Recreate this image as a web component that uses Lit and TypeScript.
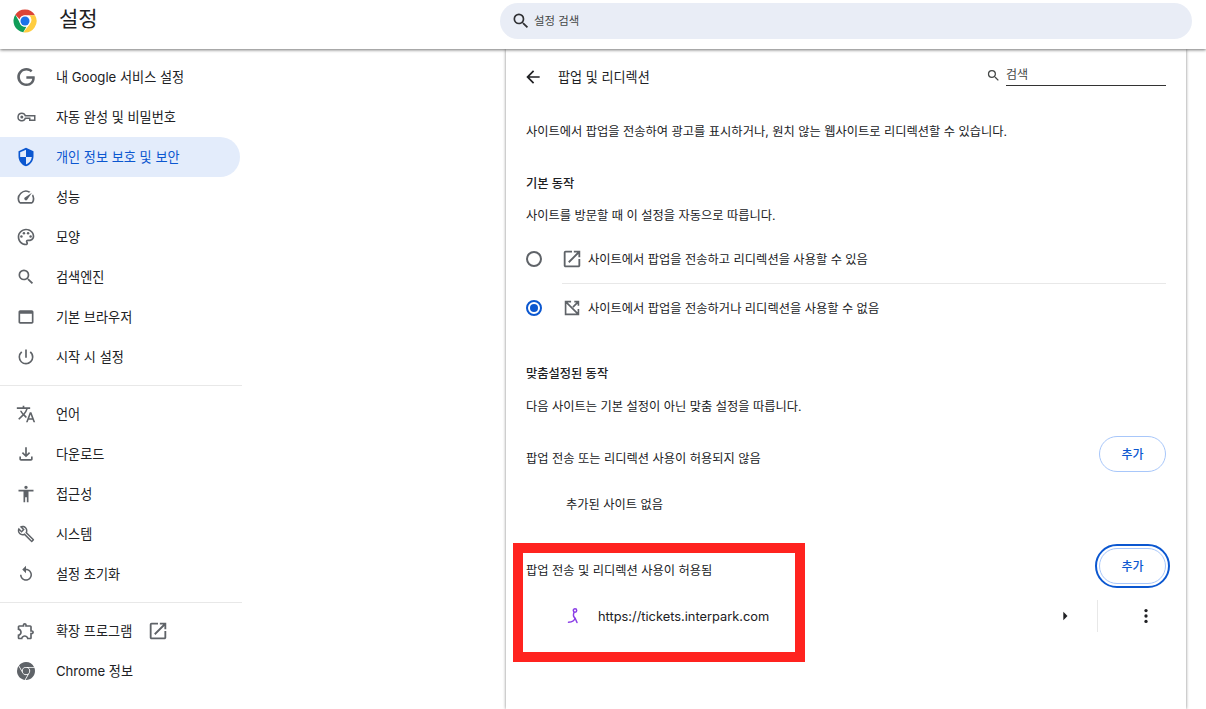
import { LitElement, html, css, svg } from "lit";
import { customElement } from "lit/decorators.js";

const P: Record<string, any> = {
  g: svg`<path d="M12.48 10.92v3.28h7.84c-.24 1.84-.853 3.187-1.787 4.133-1.147 1.147-2.933 2.4-6.053 2.4-4.827 0-8.6-3.893-8.6-8.72s3.773-8.72 8.6-8.72c2.6 0 4.507 1.027 5.907 2.347l2.307-2.307C18.747 1.44 16.133 0 12.48 0 5.867 0 .307 5.387.307 12s5.56 12 12.173 12c3.573 0 6.267-1.173 8.373-3.36 2.16-2.16 2.84-5.213 2.84-7.667 0-.76-.053-1.467-.173-2.053H12.48z"/>`,
  key: svg`<path d="M7 7.500a4.500 4.500 0 1 0 4.200 6h5.300v2.500h6v-5.500h-11.300A4.500 4.500 0 0 0 7 7.500z" fill="none" stroke="currentColor" stroke-width="1.800"/><circle cx="7" cy="12" r="1.800"/>`,
  shield: svg`<path d="M12 1L3 5v6c0 5.55 3.84 10.74 9 12 5.16-1.26 9-6.45 9-12V5l-9-4zm0 10.99h7c-.53 4.12-3.28 7.79-7 8.94V12H5V6.3l7-3.11v8.8z"/>`,
  speed: svg`<path d="M20.38 8.57l-1.23 1.85a8 8 0 0 1-.22 7.58H5.07A8 8 0 0 1 15.58 6.85l1.85-1.23A10 10 0 0 0 3.35 19a2 2 0 0 0 1.72 1h13.85a2 2 0 0 0 1.74-1 10 10 0 0 0-.27-10.44zm-9.79 6.84a2 2 0 0 0 2.83 0l5.66-8.49-8.49 5.66a2 2 0 0 0 0 2.83z"/>`,
  palette: svg`<path d="M12 22C6.49 22 2 17.51 2 12S6.49 2 12 2s10 4.04 10 9c0 3.31-2.69 6-6 6h-1.77c-.28 0-.5.22-.5.5 0 .12.05.23.13.33.41.47.64 1.06.64 1.67 0 1.38-1.12 2.5-2.5 2.5zm0-18c-4.41 0-8 3.59-8 8s3.59 8 8 8c.28 0 .5-.22.5-.5a.54.54 0 0 0-.14-.35c-.41-.46-.63-1.05-.63-1.65 0-1.38 1.12-2.5 2.5-2.5H16c2.21 0 4-1.79 4-4 0-3.86-3.59-7-8-7z"/><circle cx="6.500" cy="11.500" r="1.500"/><circle cx="9.500" cy="7.500" r="1.500"/><circle cx="14.500" cy="7.500" r="1.500"/><circle cx="17.500" cy="11.500" r="1.500"/>`,
  search: svg`<path d="M15.5 14h-.79l-.28-.27A6.471 6.471 0 0 0 16 9.5 6.5 6.5 0 1 0 9.5 16c1.61 0 3.09-.59 4.23-1.57l.27.28v.79l5 4.99L20.49 19l-4.99-5zm-6 0C7.01 14 5 11.99 5 9.5S7.01 5 9.5 5 14 7.01 14 9.5 11.99 14 9.5 14z"/>`,
  web: svg`<path d="M19 4H5c-1.11 0-2 .9-2 2v12c0 1.1.89 2 2 2h14c1.1 0 2-.9 2-2V6c0-1.1-.89-2-2-2zm0 14H5V8h14v10z"/>`,
  power: svg`<path d="M13 3h-2v10h2V3zm4.83 2.17l-1.42 1.42A6.92 6.92 0 0 1 19 12c0 3.87-3.13 7-7 7A6.995 6.995 0 0 1 7.58 6.58L6.17 5.17A8.932 8.932 0 0 0 3 12a9 9 0 0 0 18 0c0-2.74-1.23-5.18-3.17-6.83z"/>`,
  lang: svg`<path d="M12.87 15.07l-2.54-2.51.03-.03A17.52 17.52 0 0 0 14.07 6H17V4h-7V2H8v2H1v1.99h11.17C11.5 7.92 10.44 9.75 9 11.35 8.07 10.32 7.3 9.19 6.69 8h-2c.73 1.63 1.73 3.17 2.98 4.56l-5.09 5.02L4 19l5-5 3.11 3.11.76-2.04zM18.5 10h-2L12 22h2l1.12-3h4.75L21 22h2l-4.5-12zm-2.62 7l1.62-4.33L19.12 17h-3.24z"/>`,
  down: svg`<path d="M18 15v3H6v-3H4v3c0 1.1.9 2 2 2h12c1.1 0 2-.9 2-2v-3h-2zm-1-4l-1.41-1.41L13 12.17V4h-2v8.17L8.41 9.59 7 11l5 5 5-5z"/>`,
  access: svg`<path d="M12 2c1.1 0 2 .9 2 2s-.9 2-2 2-2-.9-2-2 .9-2 2-2zm9 7h-6v13h-2v-6h-2v6H9V9H3V7h18v2z"/>`,
  build: svg`<path d="M22.61 18.99l-9.08-9.08c.93-2.34.45-5.1-1.44-7C9.79.61 6.21.4 3.66 2.26L7.5 6.11 6.08 7.52 2.25 3.69C.39 6.23.6 9.82 2.9 12.11c1.86 1.86 4.57 2.35 6.89 1.48l9.11 9.11c.39.39 1.02.39 1.41 0l2.3-2.3c.4-.38.4-1.01 0-1.41zm-3 1.6l-9.46-9.46c-.61.45-1.29.72-2 .82-1.36.2-2.79-.21-3.83-1.25C3.37 9.76 2.93 8.5 3 7.26l3.09 3.09 4.24-4.24-3.09-3.09c1.24-.07 2.49.37 3.44 1.31 1.08 1.08 1.49 2.57 1.24 3.96-.12.71-.42 1.37-.88 1.96l9.45 9.45-.88.88z"/>`,
  restore: svg`<path d="M12 5V1L7 6l5 5V7c3.31 0 6 2.69 6 6s-2.69 6-6 6-6-2.69-6-6H4c0 4.42 3.58 8 8 8s8-3.58 8-8-3.58-8-8-8z"/>`,
  ext: svg`<path d="M10.5 4.5c.28 0 .5.22.5.5v2h6v6h2c.28 0 .5.22.5.5s-.22.5-.5.5h-2v6h-2.120c-.68-1.750-2.390-3-4.380-3s-3.700 1.250-4.380 3H4v-2.120c1.750-.68 3-2.390 3-4.380 0-1.990-1.240-3.700-2.990-4.380L4 7h6V5c0-.28.22-.5.5-.5m0-2C9.120 2.500 8 3.620 8 5H4c-1.100 0-1.990.9-1.990 2v3.800h.29c1.490 0 2.700 1.210 2.700 2.700s-1.210 2.700-2.700 2.700H2V20c0 1.100.9 2 2 2h3.800v-.3c0-1.490 1.210-2.700 2.700-2.700s2.700 1.210 2.700 2.700v.3H17c1.100 0 2-.9 2-2v-4c1.380 0 2.500-1.120 2.500-2.500S20.380 11 19 11V7c0-1.100-.9-2-2-2h-4c0-1.380-1.120-2.500-2.500-2.500z"/>`,
  chrome: svg`<path d="M12 0C8.21 0 4.831 1.757 2.632 4.501l3.953 6.848A5.454 5.454 0 0 1 12 6.545h10.691A12 12 0 0 0 12 0zM1.931 5.47A11.943 11.943 0 0 0 0 12c0 6.012 4.42 10.991 10.189 11.864l3.953-6.847a5.45 5.45 0 0 1-6.865-2.29zm13.342 2.166a5.446 5.446 0 0 1 1.45 7.09l.002.003h-.002l-5.344 9.257c.206.01.413.016.621.016 6.627 0 12-5.373 12-12 0-1.54-.29-3.011-.818-4.364zM12 16.364a4.364 4.364 0 1 1 0-8.728 4.364 4.364 0 0 1 0 8.728Z"/>`,
  open: svg`<path d="M19 19H5V5h7V3H5a2 2 0 0 0-2 2v14c0 1.100.9 2 2 2h14c1.100 0 2-.9 2-2v-7h-2v7zM14 3v2h3.590l-9.830 9.830 1.410 1.410L19 6.410V10h2V3h-7z"/>`,
  blocked: svg`<path fill="none" stroke="currentColor" stroke-width="1.800" d="M11 5H5v14h14v-6M5 5l14 14M13 11l6-6M14.500 5H19v4.500"/>`,
  back: svg`<path d="M20 11H7.830l5.590-5.590L12 4l-8 8 8 8 1.410-1.410L7.830 13H20v-2z"/>`,
  right: svg`<path d="M10 17l5-5-5-5v10z"/>`,
  more: svg`<circle cx="12" cy="5.500" r="2"/><circle cx="12" cy="12" r="2"/><circle cx="12" cy="18.500" r="2"/>`,
};

const icon = (name: string, cls = "") =>
  html`<svg class="ic ${cls}" viewBox="0 0 24 24" fill="currentColor">${P[name]}</svg>`;

const groups = [
  [
    ["g", "내 Google 서비스 설정", "small"],
    ["key", "자동 완성 및 비밀번호", ""],
    ["shield", "개인 정보 보호 및 보안", ""],
    ["speed", "성능", ""],
    ["palette", "모양", ""],
    ["search", "검색엔진", ""],
    ["web", "기본 브라우저", ""],
    ["power", "시작 시 설정", ""],
  ],
  [
    ["lang", "언어", ""],
    ["down", "다운로드", ""],
    ["access", "접근성", ""],
    ["build", "시스템", "small"],
    ["restore", "설정 초기화", "small"],
  ],
  [
    ["ext", "확장 프로그램", ""],
    ["chrome", "Chrome 정보", "small"],
  ],
];

@customElement("app-root")
export class AppRoot extends LitElement {
  static styles = css`
    :host {
      display: block;
      position: relative;
      height: 709px;
      overflow: hidden;
      background: #fff;
      color: #202124;
      font-family: Inter, "Noto Sans CJK KR", sans-serif;
      font-size: 12.25px;
    }
    .ic { width: 20px; height: 20px; flex: none; display: block; }
    header {
      position: relative;
      z-index: 2;
      height: 49px;
      box-sizing: border-box;
      display: flex;
      background: #fff;
      box-shadow: 0 1px 3px rgba(0, 0, 0, 0.55);
    }
    .brand { width: 500px; display: flex; align-items: flex-start; padding: 9px 0 0 13px; box-sizing: border-box; }
    .brand svg { width: 24px; height: 24px; flex: none; }
    .brand h1 { margin: -3px 0 0 22px; font-size: 21px; line-height: 26px; font-weight: 400; }
    .search {
      width: 692px;
      height: 36px;
      margin-top: 3px;
      border-radius: 18px;
      background: #e9edf6;
      display: flex;
      align-items: center;
      padding-left: 11px;
      box-sizing: border-box;
      font-size: 11.4px;
      gap: 3px;
      color: #444746;
    }
    .search span { padding-bottom: 2px; }
    .search .ic { width: 20px; height: 20px; color: #303134; }
    .body { display: flex; height: 660px; }
    nav { width: 242px; flex: none; padding-top: 8px; }
    .item {
      height: 40px;
      width: 240px;
      border-radius: 0 20px 20px 0;
      display: flex;
      align-items: center;
      color: #202124;
      font-size: 13.15px;
    }
    .item span { padding-bottom: 2px; }
    .item .ic { margin-left: 16px; margin-right: 20px; color: #5f6368; }
    .item .ic.small { width: 18px; height: 18px; margin-left: 17px; margin-right: 21px; }
    .item.active { background: #e3ecfb; color: #0b57d0; }
    .item.active .ic { color: #0b57d0; }
    .item .ic.ext-link { width: 22px; height: 22px; margin: 0 0 0 15px; }
    nav hr { border: 0; border-top: 1px solid #e8e8e8; margin: 8px 0 8px; width: 242px; }
    main {
      width: 680px;
      margin-left: 264px;
      padding: 0 20px;
      box-sizing: border-box;
      background: #fff;
      box-shadow: 0 0 3px rgba(0, 0, 0, 0.5);
      flex: none;
    }
    .row { display: flex; align-items: center; }
    .sub { height: 56px; }
    .sub .back { margin-left: -3px; color: #202124; }
    .sub .row-title { margin-left: 15px; flex: 1; font-size: 13.1px; padding-bottom: 2px; }
    .sub .find { display: flex; align-items: center; width: 180px; gap: 5px; margin-top: -3px; }
    .find .ic { width: 15px; height: 15px; color: #444746; }
    .find span { flex: 1; border-bottom: 1px solid #333; height: 19px; line-height: 18px; font-size: 12px; color: #444746; }
    .t { height: 32px; }
    .desc { margin-top: 10px; }
    .h1 { margin-top: 20px; font-weight: 500; }
    .h2 { margin-top: 0; }
    .radio { height: 48px; }
    .r1 { margin-top: 4px; }
    .rule { border-top: 1px solid #e8e8e8; margin-left: 36px; }
    .dot {
      width: 16px; height: 16px; border-radius: 50%; box-sizing: border-box;
      border: 2px solid #5f6368; flex: none; margin-right: 19px;
      display: flex; align-items: center; justify-content: center;
    }
    .dot.on { border-color: #0b57d0; }
    .dot.on::after { content: ""; width: 8px; height: 8px; border-radius: 50%; background: #0b57d0; }
    .radio .ic { width: 22px; height: 22px; color: #5f6368; margin-right: 5px; }
    .h3 { margin-top: 25px; font-weight: 500; }
    .h4 { margin-top: 1px; }
    .cat { justify-content: space-between; height: 36px; }
    .cat > span { padding-top: 7px; }
    .cat1 { margin-top: 14px; }
    .cat2 { margin-top: 26px; }
    .none { margin-top: 14px; padding: 0 0 0 40px; height: 36px; box-sizing: border-box; display: flex; align-items: center; }
    button {
      width: 67px; height: 36px; border-radius: 18px; background: #fff;
      border: 1px solid #a8c7fa; color: #0b57d0; font: inherit; font-size: 12px; font-weight: 500; padding: 0 0 2px;
    }
    button.focus { outline: 2px solid #0b57d0; outline-offset: 2px; }
    .site { height: 40px; margin-top: 12px; padding-left: 40px; }
    .site .fav { width: 16px; height: 18px; margin-left: 1px; margin-right: 15px; flex: none; }
    .site .url { flex: 1; font-size: 12.85px; }
    .site .arr { color: #202124; margin-right: 22px; }
    .site .v { width: 1px; height: 32px; background: #e8e8e8; }
    .site .ic.more { margin: 0 10px 0 38px; color: #202124; }
    .mark {
      position: absolute;
      left: 513px; top: 543px;
      width: 292px; height: 119px;
      box-sizing: border-box;
      border: 10px solid #ff231f;
      pointer-events: none;
    }
  `;

  render() {
    return html`
      <header>
        <div class="brand">
          <svg viewBox="0 0 24 24">
            <path fill="#db4437" d="M12 0.5a11.500 11.500 0 0 1 10 5.750H12a5.750 5.750 0 0 0-5.400 3.900L2.300 5.700A11.500 11.500 0 0 1 12 0.500z"/>
            <path fill="#0f9d58" d="M2.300 5.700l4.600 8a5.750 5.750 0 0 0 6.500 4l-3.100 5.600A11.500 11.500 0 0 1 2.300 5.700z"/>
            <path fill="#ffcd40" d="M22 6.250A11.500 11.500 0 0 1 10.300 23.400L16.800 15A5.750 5.750 0 0 0 16 6.250z"/>
            <circle cx="12" cy="12" r="5.600" fill="#fff"/>
            <circle cx="12" cy="12" r="4.500" fill="#1a73e8"/>
          </svg>
          <h1>설정</h1>
        </div>
        <div class="search">${icon("search")}<span>설정 검색</span></div>
      </header>
      <div class="body">
        <nav>
          ${groups.map(
            (g, i) => html`
              ${i ? html`<hr />` : ""}
              ${g.map(
                ([ic, label, cls]) => html`<div class="item ${label.startsWith("개인") ? "active" : ""}">
                  ${icon(ic, cls)}<span>${label}</span>
                  ${ic === "ext" ? icon("open", "ext-link") : ""}
                </div>`
              )}
            `
          )}
        </nav>
        <main>
          <div class="row sub">
            ${icon("back", "back")}
            <span class="row-title">팝업 및 리디렉션</span>
            <div class="find">${icon("search")}<span>검색</span></div>
          </div>
          <div class="row t desc">사이트에서 팝업을 전송하여 광고를 표시하거나, 원치 않는 웹사이트로 리디렉션할 수 있습니다.</div>
          <div class="row t h1">기본 동작</div>
          <div class="row t h2">사이트를 방문할 때 이 설정을 자동으로 따릅니다.</div>
          <div class="row radio r1"><span class="dot"></span>${icon("open")}<span>사이트에서 팝업을 전송하고 리디렉션을 사용할 수 있음</span></div>
          <div class="rule"></div>
          <div class="row radio r2"><span class="dot on"></span>${icon("blocked")}<span>사이트에서 팝업을 전송하거나 리디렉션을 사용할 수 없음</span></div>
          <div class="row t h3">맞춤설정된 동작</div>
          <div class="row t h4">다음 사이트는 기본 설정이 아닌 맞춤 설정을 따릅니다.</div>
          <div class="row cat cat1"><span>팝업 전송 또는 리디렉션 사용이 허용되지 않음</span><button>추가</button></div>
          <div class="none">추가된 사이트 없음</div>
          <div class="row cat cat2"><span>팝업 전송 및 리디렉션 사용이 허용됨</span><button class="focus">추가</button></div>
          <div class="row site">
            <svg class="fav" viewBox="0 0 16 18" fill="none" stroke="#8a3de6" stroke-width="1.500" stroke-linecap="round">
              <circle cx="8" cy="3.500" r="1.700"/>
              <path d="M7 5.500C6 8 6.500 10 8 11l2 4.500M8 11c-.5 3-3 4-6.500 4.200"/>
            </svg>
            <span class="url">https://tickets.interpark.com</span>
            ${icon("right", "arr")}
            <span class="v"></span>
            ${icon("more", "more")}
          </div>
        </main>
      </div>
      <div class="mark"></div>
    `;
  }
}
